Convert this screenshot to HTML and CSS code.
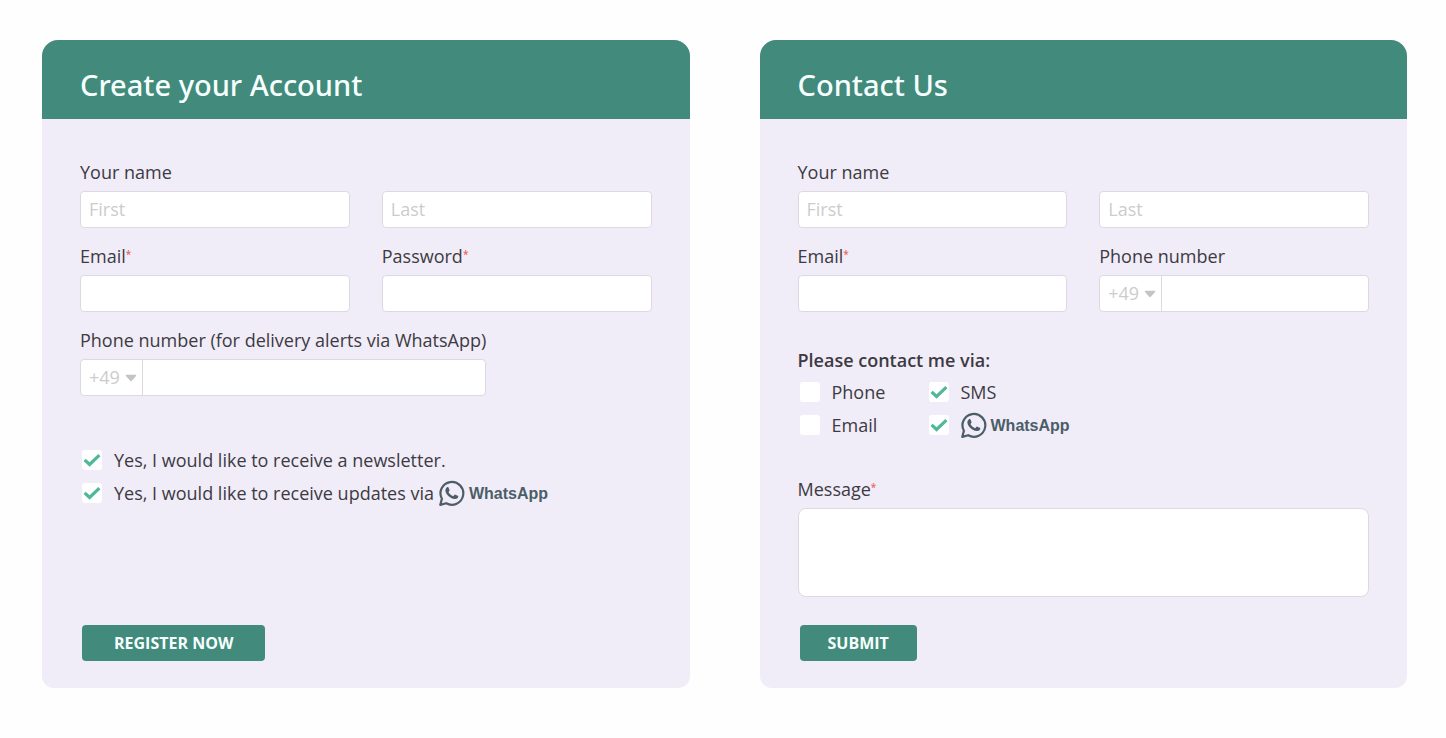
FILE: index.html
```html
<!DOCTYPE html>
<html lang="en">
<head>
<meta charset="utf-8">
<meta name="viewport" content="width=device-width, initial-scale=1">
<title>Create your Account</title>
<link rel="stylesheet" href="styles.css">
</head>
<body>
<svg class="defs" width="0" height="0" aria-hidden="true">
  <symbol id="wa" viewBox="0 0 26 26">
    <path d="M1.3 24.9 2.9 18.8A11.4 11.4 0 1 1 7.2 23.2Z" fill="none" stroke="currentColor" stroke-width="2.2" stroke-linejoin="round"/>
    <path d="M8 7.3c.5-.3 1.2-.3 1.5.3l1 2.3c.1.4 0 .7-.2 1l-.8 1.1c1 2 2.6 3.4 4.8 4.2l1-1.3c.3-.3.6-.4 1-.2l2.5 1.1c.5.3.6.6.5 1-.4 1.6-1.9 2.4-3.6 2.2-5-.7-8.8-4.5-9.3-8.3-.1-1.4.6-2.700 1.6-3.400Z" fill="currentColor"/>
  </symbol>
  <symbol id="caret" viewBox="0 0 12 8">
    <path d="M1.5 1.5h9L6 6.5Z" fill="currentColor" stroke="currentColor" stroke-width="1.5" stroke-linejoin="round"/>
  </symbol>
  <symbol id="tick" viewBox="0 0 20 20">
    <path d="M2.6 9.8 7.6 14.5 17.4 5.2" fill="none" stroke="currentColor" stroke-width="3.2"/>
  </symbol>
</svg>
<main class="page">
  <form class="card">
    <h1 class="card-title">Create your Account</h1>
    <div class="card-body">
      <div class="fields">
        <div class="field">
          <label for="a-first">Your name</label>
          <input class="box" id="a-first" type="text" placeholder="First">
        </div>
        <div class="field">
          <input class="box" type="text" placeholder="Last" aria-label="Last name">
        </div>
        <div class="field">
          <label for="a-email">Email<span class="req">*</span></label>
          <input class="box" id="a-email" type="email">
        </div>
        <div class="field">
          <label for="a-pass">Password<span class="req">*</span></label>
          <input class="box" id="a-pass" type="password">
        </div>
        <div class="field field-fit">
          <label for="a-phone">Phone number (for delivery alerts via WhatsApp)</label>
          <div class="phone box">
            <select class="code" aria-label="Country code"><option>+49</option></select>
            <svg class="caret" aria-hidden="true"><use href="#caret"/></svg>
            <input class="number" id="a-phone" type="tel">
          </div>
        </div>
      </div>
      <div class="checks checks-signup">
        <label class="check"><span class="tickbox"><input type="checkbox" checked><svg aria-hidden="true"><use href="#tick"/></svg></span>Yes, I would like to receive a newsletter.</label>
        <label class="check"><span class="tickbox"><input type="checkbox" checked><svg aria-hidden="true"><use href="#tick"/></svg></span><span class="with-brand">Yes, I would like to receive updates via <span class="brand"><svg aria-hidden="true"><use href="#wa"/></svg>WhatsApp</span></span></label>
      </div>
      <button class="action action-wide" type="submit">REGISTER NOW</button>
    </div>
  </form>

  <form class="card">
    <h1 class="card-title">Contact Us</h1>
    <div class="card-body">
      <div class="fields">
        <div class="field">
          <label for="c-first">Your name</label>
          <input class="box" id="c-first" type="text" placeholder="First">
        </div>
        <div class="field">
          <input class="box" type="text" placeholder="Last" aria-label="Last name">
        </div>
        <div class="field">
          <label for="c-email">Email<span class="req">*</span></label>
          <input class="box" id="c-email" type="email">
        </div>
        <div class="field">
          <label for="c-phone">Phone number</label>
          <div class="phone box">
            <select class="code" aria-label="Country code"><option>+49</option></select>
            <svg class="caret" aria-hidden="true"><use href="#caret"/></svg>
            <input class="number" id="c-phone" type="tel">
          </div>
        </div>
      </div>
      <fieldset class="via">
        <legend>Please contact me via:</legend>
        <div class="checks checks-via">
          <label class="check"><span class="tickbox"><input type="checkbox"><svg aria-hidden="true"><use href="#tick"/></svg></span>Phone</label>
          <label class="check"><span class="tickbox"><input type="checkbox" checked><svg aria-hidden="true"><use href="#tick"/></svg></span>SMS</label>
          <label class="check"><span class="tickbox"><input type="checkbox"><svg aria-hidden="true"><use href="#tick"/></svg></span>Email</label>
          <label class="check"><span class="tickbox"><input type="checkbox" checked><svg aria-hidden="true"><use href="#tick"/></svg></span><span class="brand"><svg aria-hidden="true"><use href="#wa"/></svg>WhatsApp</span></label>
        </div>
      </fieldset>
      <div class="field message">
        <label for="c-msg">Message<span class="req">*</span></label>
        <textarea class="box area" id="c-msg"></textarea>
      </div>
      <button class="action" type="submit">SUBMIT</button>
    </div>
  </form>
</main>
</body>
</html>
```

FILE: styles.css
```css
* { box-sizing: border-box; }
body {
  margin: 0;
  background: #fefefe;
  color: #3d3a42;
  font: 18px/24px "Open Sans", "Noto Sans", sans-serif;
}
.defs { position: absolute; }
.page {
  display: grid;
  grid-template-columns: 1fr 1fr;
  gap: 70px;
  padding: 40px 39px 50px 42px;
}
.card {
  display: flex;
  flex-direction: column;
  background: #f0edf8;
  border-radius: 16px 16px 12px 12px;
  overflow: hidden;
}
.card-title {
  margin: 0;
  padding: 29px 38px 18px;
  background: #418a7c;
  color: #f6fffd;
  font: 500 29px/32px "Noto Sans", sans-serif;
}
.card-body {
  flex: 1;
  display: flex;
  flex-direction: column;
  align-items: stretch;
  padding: 41px 38px 27px;
}
.fields {
  display: grid;
  grid-template-columns: 1fr 1fr;
  gap: 16px 32px;
}
.field {
  display: flex;
  flex-direction: column;
  justify-content: flex-end;
  gap: 7px;
  min-width: 0;
}
.field-fit { grid-column: 1 / -1; justify-self: start; }
.req {
  color: #f0625f;
  font-size: 10px;
  font-weight: 600;
  line-height: 10px;
  vertical-align: 5px;
}
.box {
  width: 100%;
  height: 37px;
  padding: 0 8px 2px;
  border: 1px solid #dcd9e2;
  border-radius: 4px;
  background: #fff;
  color: #3d3a42;
  font: inherit;
  outline-color: #418a7c;
}
.box::placeholder { color: #ccc; opacity: 1; }
.phone { display: flex; align-items: center; padding: 0; }
.code {
  appearance: none;
  width: 62px;
  height: 100%;
  padding: 0 0 2px 8px;
  border: 0;
  border-right: 1px solid #dcd9e2;
  border-radius: 3px 0 0 3px;
  background: none;
  color: #ccc;
  font: inherit;
}
.caret {
  width: 12px;
  height: 8px;
  margin-left: -18px;
  margin-right: 6px;
  color: #c4c4c4;
  pointer-events: none;
}
.number {
  flex: 1;
  min-width: 0;
  height: 100%;
  padding: 0 9px;
  border: 0;
  border-radius: 3px;
  background: none;
  font: inherit;
}
.checks { display: grid; gap: 9px; }
.checks-signup { margin: 52px 0 0 2px; justify-items: start; }
.checks-via {
  grid-template-columns: 97px auto;
  column-gap: 32px;
  justify-content: start;
  margin: 8px 0 0 2px;
}
.check { display: flex; align-items: center; gap: 12px; height: 24px; }
.tickbox { display: grid; flex: none; }
.tickbox input, .tickbox svg { grid-area: 1 / 1; width: 20px; height: 20px; }
.tickbox input {
  appearance: none;
  margin: 0;
  border-radius: 3px;
  background: #fff;
}
.tickbox svg { color: #50b898; visibility: hidden; pointer-events: none; }
.tickbox input:checked + svg { visibility: visible; }
.with-brand { display: flex; align-items: center; gap: 5px; }
.brand {
  display: flex;
  align-items: flex-end;
  gap: 4px;
  color: #4c5d68;
  font: bold 16px/24px "Liberation Sans", Arial, sans-serif;
}
.brand svg { width: 26px; height: 26px; }
.via { min-width: 0; margin: 36px 0 0; padding: 0; border: 0; }
.via legend { padding: 0; font-weight: 600; }
.message { margin: 40px 0 28px; }
.area { display: block; height: 89px; padding: 8px 9px; border-radius: 8px; resize: none; }
.action {
  align-self: flex-start;
  height: 36px;
  margin: auto 0 0 2px;
  padding: 0 28px 1px;
  border: 0;
  border-radius: 4px;
  background: #418a7c;
  color: #f6fffd;
  font: inherit;
  font-size: 16px;
  font-weight: 700;
  line-height: 20px;
}
.action-wide { padding: 0 32px 1px; }
```
